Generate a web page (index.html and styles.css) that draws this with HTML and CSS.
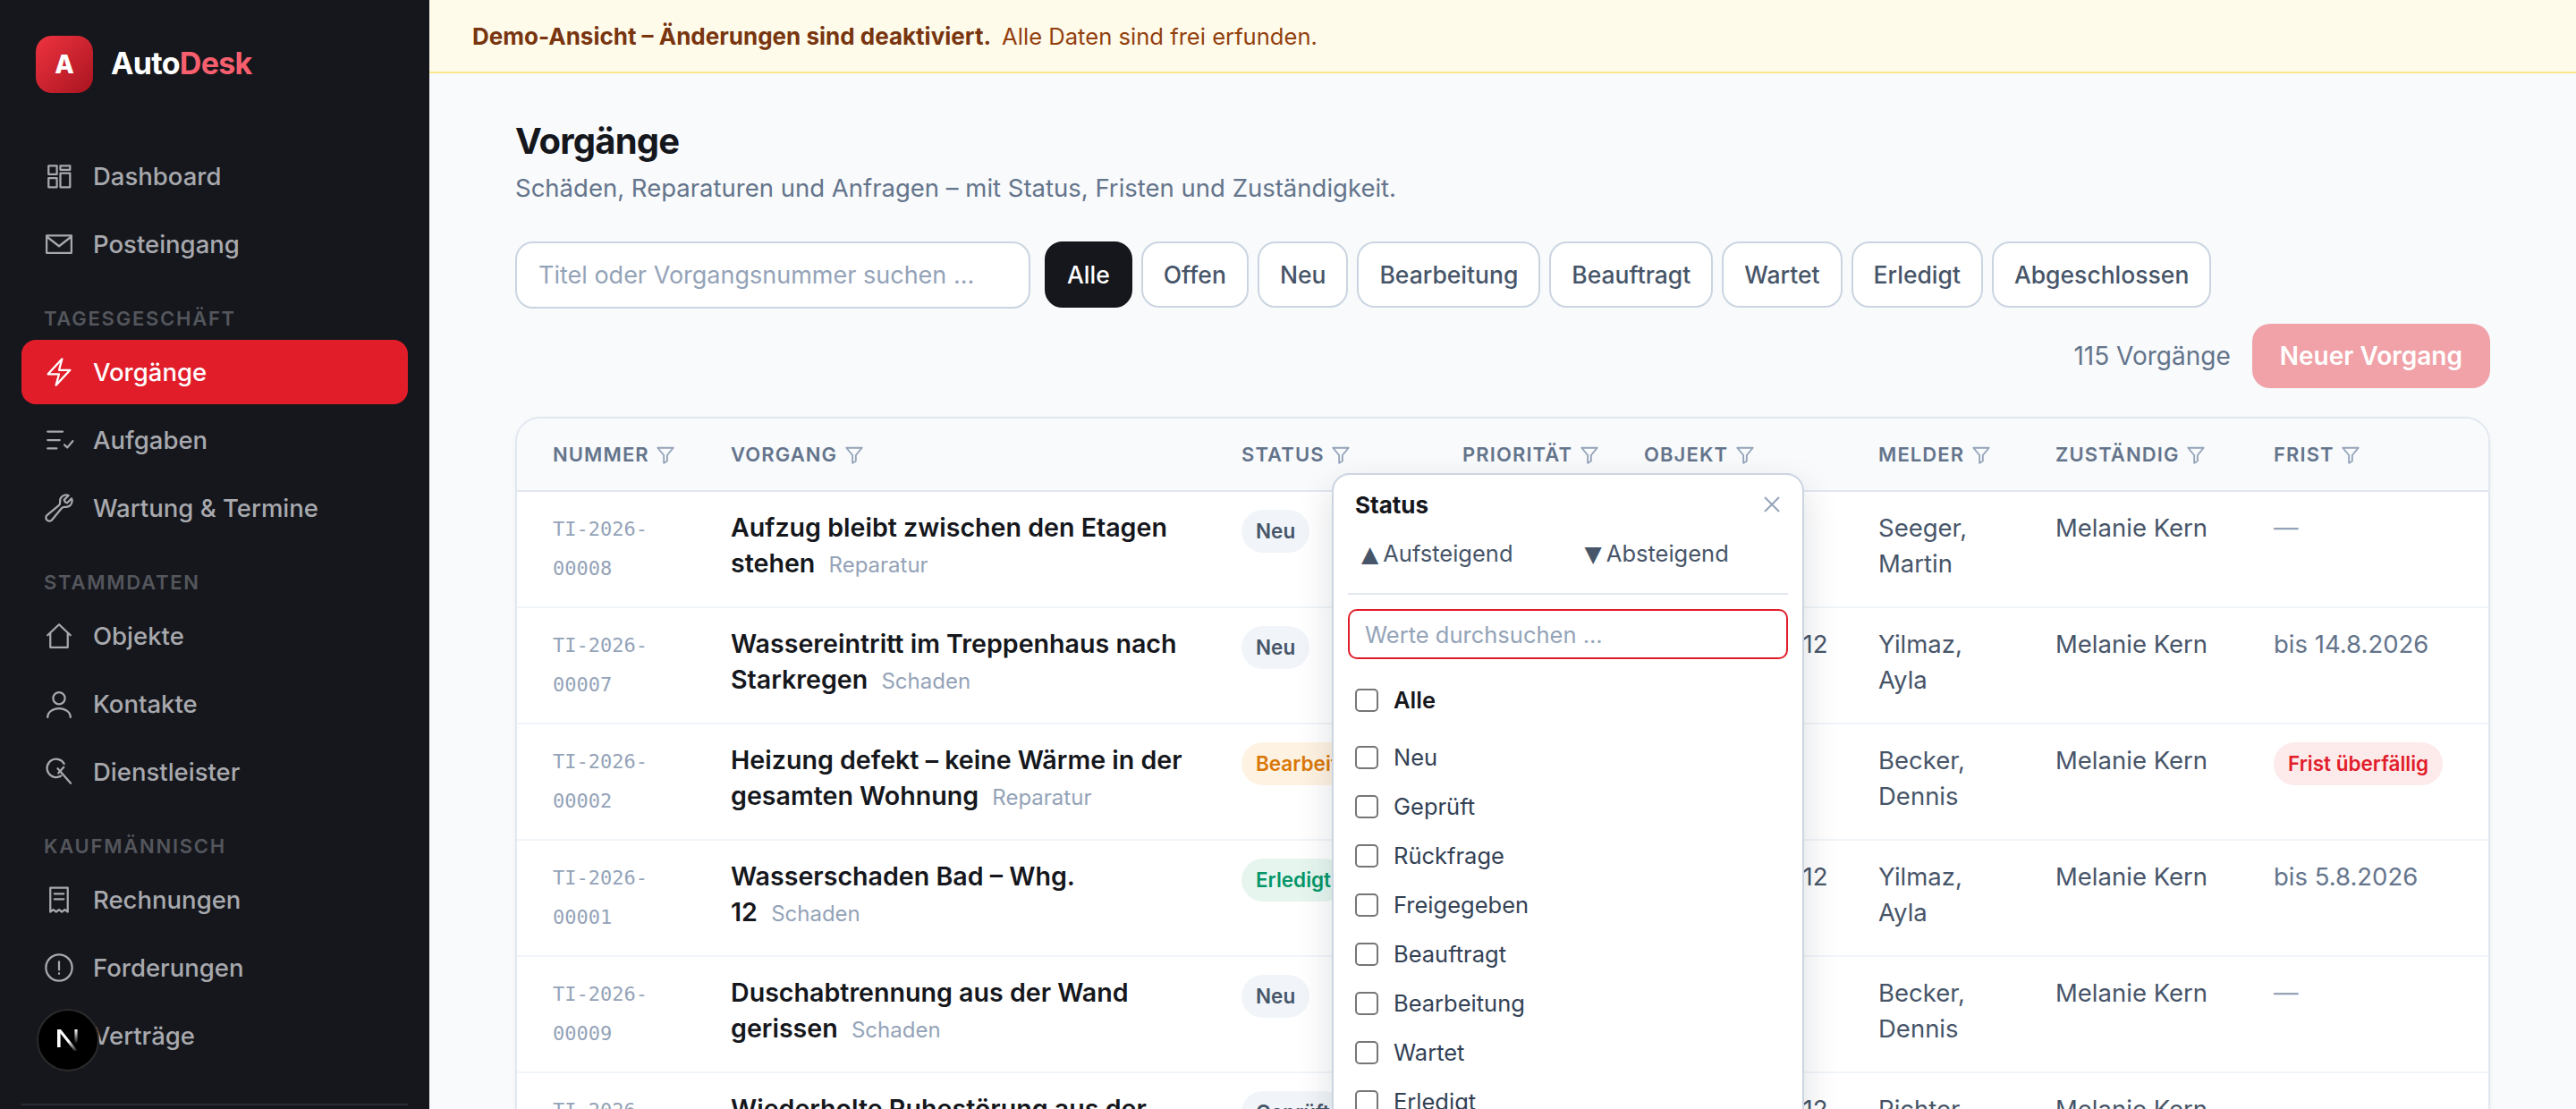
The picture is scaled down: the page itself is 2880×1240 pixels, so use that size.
FILE: index.html
```html
<!DOCTYPE html>
<html lang="de">
<head>
    <meta charset="UTF-8">
    <title>AutoDesk – Vorgänge</title>
    <link rel="stylesheet" href="styles.css">
</head>
<body>

    <svg class="icon-defs" aria-hidden="true">
        <symbol id="funnel" viewBox="0 0 24 24"><path d="M2.5 3h19l-7.5 9v7l-4 2.5V12z"/></symbol>
    </svg>

    <aside class="sidebar">
        <div class="brand">
            <span class="brand-mark">A</span>
            <span class="brand-name">Auto<span class="brand-accent">Desk</span></span>
        </div>

        <nav class="side-nav">
            <a class="nav-item" href="#">
                <svg class="nav-icon" viewBox="0 0 24 24"><path d="M4.2 4.2h6.2v6.4H4.2zM13 4.2h7.2v3H13zM4.2 13.4h6.2v6.8H4.2zM13 9.8h7.2v10.4H13z"/></svg>
                Dashboard
            </a>
            <a class="nav-item" href="#">
                <svg class="nav-icon" viewBox="0 0 24 24"><path d="M2.75 5.5h18.5v13H2.75zM3 6.5l9 7 9-7"/></svg>
                Posteingang
            </a>

            <div class="nav-label">Tagesgeschäft</div>
            <a class="nav-item active" href="#">
                <svg class="nav-icon" viewBox="0 0 24 24"><path d="M3.75 13.5l10.5-11.25L12 10.5h8.25L9.75 21.75 12 13.5H3.75z"/></svg>
                Vorgänge
            </a>
            <a class="nav-item" href="#">
                <svg class="nav-icon" viewBox="0 0 24 24"><path d="M3.5 5.7h11.2M3.5 12h9M3.5 18.3h6.7M16 15.6l2.2 2 4-4.8"/></svg>
                Aufgaben
            </a>
            <a class="nav-item" href="#">
                <svg class="nav-icon" viewBox="0 0 24 24"><path d="M21.75 6.75a4.5 4.5 0 01-4.884 4.484c-1.076-.091-2.264.071-2.95.904l-7.152 8.684a2.548 2.548 0 11-3.586-3.586l8.684-7.152c.833-.686.995-1.874.904-2.95a4.5 4.5 0 016.336-4.486l-3.276 3.276a3.004 3.004 0 002.25 2.25l3.276-3.276c.256.565.4 1.192.4 1.852z"/></svg>
                Wartung &amp; Termine
            </a>

            <div class="nav-label">Stammdaten</div>
            <a class="nav-item" href="#">
                <svg class="nav-icon" viewBox="0 0 24 24"><path d="M3.5 11.5L12 3.5l8.5 8M5.5 10v10.5h13V10"/></svg>
                Objekte
            </a>
            <a class="nav-item" href="#">
                <svg class="nav-icon" viewBox="0 0 24 24"><circle cx="12" cy="7.8" r="4.4"/><path d="M3.5 22c0-3.8 3.8-6.6 8.5-6.6s8.5 2.8 8.5 6.6"/></svg>
                Kontakte
            </a>
            <a class="nav-item" href="#">
                <svg class="nav-icon" viewBox="0 0 24 24"><path d="M15.8 6a6.8 6.8 0 10-2.3 9M11 9.5l9.7 11M11.5 13l4-4.5"/></svg>
                Dienstleister
            </a>

            <div class="nav-label">Kaufmännisch</div>
            <a class="nav-item" href="#">
                <svg class="nav-icon" viewBox="0 0 24 24"><path d="M5.5 3h13v18l-2.2-1.6-2.2 1.6-2.1-1.6-2.1 1.6-2.2-1.6-2.2 1.6zM8.5 7.5h7M8.5 11.5h7"/></svg>
                Rechnungen
            </a>
            <a class="nav-item" href="#">
                <svg class="nav-icon" viewBox="0 0 24 24"><circle cx="12" cy="12" r="9.75"/><path d="M12 7.5v6M12 16.2v.3"/></svg>
                Forderungen
            </a>
            <a class="nav-item" href="#">
                <svg class="nav-icon" viewBox="0 0 24 24"><path d="M6 3h9l4 4v14H6z"/></svg>
                Verträge
            </a>
        </nav>

        <div class="side-divider"></div>

        <!-- Next.js dev indicator -->
        <div class="dev-badge">
            <svg viewBox="0 0 32 32" width="32" height="32">
                <defs>
                    <linearGradient id="nFade" x1="0" y1="0" x2="1" y2="1">
                        <stop offset="0.55" stop-color="#fff"/>
                        <stop offset="1" stop-color="#fff" stop-opacity="0"/>
                    </linearGradient>
                    <linearGradient id="nFadeUp" x1="0" y1="0" x2="0" y2="1">
                        <stop offset="0" stop-color="#fff"/>
                        <stop offset="1" stop-color="#fff" stop-opacity="0"/>
                    </linearGradient>
                </defs>
                <path d="M4 4h3.6v20H4z" fill="#fff"/>
                <path d="M4 4h4l19 24h-4z" fill="url(#nFade)"/>
                <path d="M23.4 4h3.2v16h-3.2z" fill="url(#nFadeUp)"/>
            </svg>
        </div>
    </aside>

    <div class="main">
        <div class="demo-banner">
            <strong>Demo-Ansicht – Änderungen sind deaktiviert.</strong>
            <span class="demo-note">Alle Daten sind frei erfunden.</span>
        </div>

        <div class="content">
            <h1 class="page-title">Vorgänge</h1>
            <p class="page-sub">Schäden, Reparaturen und Anfragen – mit Status, Fristen und Zuständigkeit.</p>

            <div class="toolbar">
                <input class="search" type="text" placeholder="Titel oder Vorgangsnummer suchen ...">
                <div class="chips">
                    <button class="chip active">Alle</button>
                    <button class="chip">Offen</button>
                    <button class="chip">Neu</button>
                    <button class="chip">Bearbeitung</button>
                    <button class="chip">Beauftragt</button>
                    <button class="chip">Wartet</button>
                    <button class="chip">Erledigt</button>
                    <button class="chip">Abgeschlossen</button>
                </div>
            </div>

            <div class="actions">
                <span class="count">115 Vorgänge</span>
                <button class="btn-new">Neuer Vorgang</button>
            </div>

            <div class="table-card">
                <table class="cases">
                    <colgroup>
                        <col class="c-num"><col class="c-title"><col class="c-status"><col class="c-prio">
                        <col class="c-obj"><col class="c-rep"><col class="c-owner"><col class="c-due">
                    </colgroup>
                    <thead>
                        <tr>
                            <th>Nummer <svg class="funnel"><use href="#funnel"/></svg></th>
                            <th>Vorgang <svg class="funnel"><use href="#funnel"/></svg></th>
                            <th>Status <svg class="funnel"><use href="#funnel"/></svg></th>
                            <th>Priorität <svg class="funnel"><use href="#funnel"/></svg></th>
                            <th>Objekt <svg class="funnel"><use href="#funnel"/></svg></th>
                            <th>Melder <svg class="funnel"><use href="#funnel"/></svg></th>
                            <th>Zuständig <svg class="funnel"><use href="#funnel"/></svg></th>
                            <th>Frist <svg class="funnel"><use href="#funnel"/></svg></th>
                        </tr>
                    </thead>
                    <tbody>
                        <tr>
                            <td class="num">TI-2026-<br>00008</td>
                            <td class="title">Aufzug bleibt zwischen den Etagen<br>stehen <span class="kind">Reparatur</span></td>
                            <td><span class="pill pill-grey">Neu</span></td>
                            <td></td>
                            <td class="obj">Parkring 3</td>
                            <td>Seeger, Martin</td>
                            <td>Melanie Kern</td>
                            <td class="none">—</td>
                        </tr>
                        <tr>
                            <td class="num">TI-2026-<br>00007</td>
                            <td class="title">Wassereintritt im Treppenhaus nach<br>Starkregen <span class="kind">Schaden</span></td>
                            <td><span class="pill pill-grey">Neu</span></td>
                            <td></td>
                            <td class="obj">Lindenstraße 12</td>
                            <td>Yilmaz, Ayla</td>
                            <td>Melanie Kern</td>
                            <td class="due">bis 14.8.2026</td>
                        </tr>
                        <tr>
                            <td class="num">TI-2026-<br>00002</td>
                            <td class="title">Heizung defekt – keine Wärme in der<br>gesamten Wohnung <span class="kind">Reparatur</span></td>
                            <td><span class="pill pill-amber">Bearbeitung</span></td>
                            <td></td>
                            <td class="obj">Parkring 3</td>
                            <td>Becker, Dennis</td>
                            <td>Melanie Kern</td>
                            <td><span class="pill pill-red">Frist überfällig</span></td>
                        </tr>
                        <tr>
                            <td class="num">TI-2026-<br>00001</td>
                            <td class="title">Wasserschaden Bad – Whg.<br>12 <span class="kind">Schaden</span></td>
                            <td><span class="pill pill-green">Erledigt</span></td>
                            <td></td>
                            <td class="obj">Lindenstraße 12</td>
                            <td>Yilmaz, Ayla</td>
                            <td>Melanie Kern</td>
                            <td class="due">bis 5.8.2026</td>
                        </tr>
                        <tr>
                            <td class="num">TI-2026-<br>00009</td>
                            <td class="title">Duschabtrennung aus der Wand<br>gerissen <span class="kind">Schaden</span></td>
                            <td><span class="pill pill-grey">Neu</span></td>
                            <td></td>
                            <td class="obj">Parkring 3</td>
                            <td>Becker, Dennis</td>
                            <td>Melanie Kern</td>
                            <td class="none">—</td>
                        </tr>
                        <tr>
                            <td class="num">TI-2026-<br>00010</td>
                            <td class="title">Wiederholte Ruhestörung aus der<br>Nachbarwohnung <span class="kind">Anfrage</span></td>
                            <td><span class="pill pill-grey">Geprüft</span></td>
                            <td></td>
                            <td class="obj">Lindenstraße 12</td>
                            <td>Richter, Jonas</td>
                            <td>Melanie Kern</td>
                            <td class="none">—</td>
                        </tr>
                    </tbody>
                </table>

                <!-- Column filter popover, open on Status -->
                <div class="filter-pop">
                    <div class="pop-head">
                        <span class="pop-title">Status</span>
                        <svg class="pop-close" viewBox="0 0 18 18"><path d="M1 1l16 16M17 1L1 17"/></svg>
                    </div>
                    <div class="pop-sort">
                        <span class="sort-opt"><span class="sort-arrow">▲</span>Aufsteigend</span>
                        <span class="sort-opt"><span class="sort-arrow">▼</span>Absteigend</span>
                    </div>
                    <input class="pop-search" type="text" placeholder="Werte durchsuchen ...">
                    <label class="pop-all"><input type="checkbox"> Alle</label>
                    <label class="pop-opt"><input type="checkbox"> Neu</label>
                    <label class="pop-opt"><input type="checkbox"> Geprüft</label>
                    <label class="pop-opt"><input type="checkbox"> Rückfrage</label>
                    <label class="pop-opt"><input type="checkbox"> Freigegeben</label>
                    <label class="pop-opt"><input type="checkbox"> Beauftragt</label>
                    <label class="pop-opt"><input type="checkbox"> Bearbeitung</label>
                    <label class="pop-opt"><input type="checkbox"> Wartet</label>
                    <label class="pop-opt"><input type="checkbox"> Erledigt</label>
                    <label class="pop-opt"><input type="checkbox"> Abgeschlossen</label>
                </div>
            </div>
        </div>
    </div>

</body>
</html>
```

FILE: styles.css
```css
* {
    box-sizing: border-box;
}

html, body {
    height: 100%;
}

body {
    margin: 0;
    display: flex;
    overflow: hidden;
    font-family: Inter, "Noto Sans", sans-serif;
    font-size: 27.5px;
    color: #15171c;
    background: #f8fafc;
}

.icon-defs {
    position: absolute;
    width: 0;
    height: 0;
}

/* Sidebar */
.sidebar {
    position: relative;
    flex: 0 0 480px;
    height: 100%;
    overflow: hidden;
    padding: 40px 24px 0;
    background: #15171c;
}

.brand {
    display: flex;
    align-items: center;
    gap: 20px;
    padding-left: 16px;
}

.brand-mark {
    display: flex;
    align-items: center;
    justify-content: center;
    width: 64px;
    height: 64px;
    border-radius: 18px;
    background: linear-gradient(135deg, #ef3340, #a8141f);
    color: white;
    font-size: 28px;
    font-weight: 800;
}

.brand-name {
    position: relative;
    top: -2px;
    font-size: 34px;
    font-weight: 700;
    letter-spacing: -0.02em;
    color: white;
}

.brand-accent {
    color: #f85f6e;
}

.side-nav {
    display: flex;
    flex-direction: column;
    gap: 4px;
    margin-top: 57px;
}

.nav-item {
    display: flex;
    align-items: center;
    gap: 20px;
    flex: none;
    height: 72px;
    padding-left: 24px;
    border-radius: 16px;
    color: #a8a9ae;
    font-weight: 500;
    text-decoration: none;
}

.nav-item.active {
    background: #e11d2a;
    color: white;
}

.nav-icon {
    flex: none;
    width: 36px;
    height: 36px;
    fill: none;
    stroke: currentColor;
    stroke-width: 1.5;
    stroke-linecap: round;
    stroke-linejoin: round;
}

.nav-label {
    flex: none;
    margin: 27px 0 0 25px;
    height: 36px;
    line-height: 32px;
    font-size: 22px;
    font-weight: 600;
    letter-spacing: 0.08em;
    text-transform: uppercase;
    color: #54565c;
}

.side-divider {
    height: 2px;
    margin-top: 40px;
    background: #2a2d33;
}

.dev-badge {
    position: absolute;
    left: 41px;
    top: 1128px;
    display: flex;
    align-items: center;
    justify-content: center;
    width: 70px;
    height: 70px;
    border: 2px solid #2b2b2b;
    border-radius: 50%;
    background: #000;
}

/* Main */
.main {
    flex: 1;
    min-width: 0;
    height: 100%;
    overflow: hidden;
}

.demo-banner {
    display: flex;
    align-items: center;
    gap: 12px;
    height: 82px;
    padding-left: 48px;
    background: #fffbeb;
    border-bottom: 2px solid #fde68a;
    font-size: 26px;
    color: #92400e;
}

.demo-banner strong {
    font-weight: 700;
    color: #78350f;
}

.demo-note {
    font-size: 25.6px;
}

.content {
    padding: 48px 96px;
}

.page-title {
    margin: 0;
    font-size: 40px;
    line-height: 56px;
    font-weight: 700;
    letter-spacing: -0.02em;
}

.page-sub {
    margin: 2px 0 0;
    line-height: 44px;
    color: #64748b;
}

.toolbar {
    display: flex;
    gap: 16px;
    margin-top: 38px;
}

.search {
    width: 576px;
    height: 75px;
    padding: 0 24px;
    border: 2px solid #cbd5e1;
    border-radius: 20px;
    background: white;
    font: inherit;
    font-size: 27px;
    color: #15171c;
}

.search::placeholder,
.pop-search::placeholder {
    color: #94a3b8;
    opacity: 1;
}

.chips {
    display: flex;
    gap: 10px;
}

.chip {
    height: 74px;
    padding: 0 23px;
    border: 2px solid #cbd5e1;
    border-radius: 20px;
    background: white;
    font: inherit;
    font-size: 26.5px;
    font-weight: 500;
    color: #475569;
}

.chip.active {
    border-color: #15171c;
    background: #15171c;
    color: white;
}

.actions {
    display: flex;
    align-items: center;
    justify-content: flex-end;
    gap: 24px;
    margin-top: 17px;
}

.count {
    font-size: 28px;
    color: #64748b;
}

.btn-new {
    height: 72px;
    padding: 0 31px;
    border: none;
    border-radius: 20px;
    background: #f0a2a8;
    color: white;
    font: inherit;
    font-size: 28px;
    font-weight: 600;
}

/* Table */
.table-card {
    position: relative;
    margin-top: 32px;
    border: 2px solid #e2e8f0;
    border-radius: 28px;
    background: white;
    box-shadow: 0 2px 6px rgba(15, 23, 42, 0.04);
}

.cases {
    width: 100%;
    table-layout: fixed;
    border-collapse: separate;
    border-spacing: 0;
}

.c-num { width: 199px; }
.c-title { width: 571px; }
.c-status { width: 247px; }
.c-prio { width: 203px; }
.c-obj { width: 262px; }
.c-rep { width: 198px; }
.c-owner { width: 244px; }
.c-due { width: 280px; }

.cases th {
    height: 82px;
    padding: 0 0 0 40px;
    background: #f8fafc;
    border-bottom: 2px solid #e2e8f0;
    text-align: left;
    white-space: nowrap;
    font-size: 22px;
    font-weight: 600;
    letter-spacing: 0.05em;
    text-transform: uppercase;
    color: #64748b;
}

.cases th:first-child {
    border-top-left-radius: 26px;
}

.cases th:last-child {
    border-top-right-radius: 26px;
}

.funnel {
    width: 22px;
    height: 22px;
    margin-left: 1px;
    vertical-align: -4px;
    fill: none;
    stroke: #94a3b8;
    stroke-width: 2;
    stroke-linejoin: round;
}

.cases td {
    padding: 20px 20px 20px 40px;
    border-bottom: 2px solid #f1f5f9;
    vertical-align: top;
    line-height: 40px;
    color: #475569;
}

.cases td.num {
    padding-right: 40px;
    font-family: "DejaVu Sans Mono", "Liberation Mono", monospace;
    font-size: 22px;
    line-height: 44px;
    color: #94a3b8;
}

.cases td.title {
    padding-right: 0;
    font-size: 28.6px;
    font-weight: 600;
    color: #15171c;
}

.kind {
    margin-left: 8px;
    font-size: 24px;
    font-weight: 400;
    color: #94a3b8;
}

.cases td.obj {
    white-space: nowrap;
}

.cases td.due {
    color: #64748b;
}

.cases td.none {
    color: #94a3b8;
}

.pill {
    display: inline-block;
    height: 48px;
    padding: 0 16px;
    border-radius: 24px;
    line-height: 48px;
    white-space: nowrap;
    font-size: 22.5px;
    font-weight: 600;
}

.pill-grey { background: #f1f5f9; color: #475569; }
.pill-amber { background: #fef3e2; color: #d97706; }
.pill-green { background: #e6f6ef; color: #059669; }
.pill-red { background: #fdeaea; color: #e11d2a; }

/* Filter popover */
.filter-pop {
    position: absolute;
    left: 911px;
    top: 61px;
    width: 528px;
    padding: 14px 16px 0;
    border: 2px solid #cbd5e1;
    border-radius: 20px;
    background: white;
    box-shadow: 0 16px 40px rgba(15, 23, 42, 0.14);
    font-size: 25.5px;
    color: #334155;
}

.pop-head {
    display: flex;
    align-items: center;
    justify-content: space-between;
    height: 38px;
    padding: 0 8px;
}

.pop-title {
    font-size: 26px;
    font-weight: 700;
    color: #15171c;
}

.pop-close {
    width: 18px;
    height: 18px;
    margin-right: 1px;
    fill: none;
    stroke: #94a3b8;
    stroke-width: 2;
}

.pop-sort {
    display: flex;
    gap: 80px;
    height: 82px;
    margin-bottom: 16px;
    padding: 20px 0 0 15px;
    border-bottom: 2px solid #e2e8f0;
    color: #475569;
}

.sort-arrow {
    margin-right: 5px;
    font-family: "DejaVu Sans", sans-serif;
    font-size: 25px;
}

.pop-search {
    display: block;
    width: 100%;
    height: 56px;
    padding: 0 17px;
    border: 2px solid #e11d2a;
    border-radius: 10px;
    font: inherit;
}

.pop-all,
.pop-opt {
    display: flex;
    align-items: center;
    gap: 17px;
    height: 55px;
    padding-left: 8px;
}

.pop-all {
    margin-top: 18px;
    margin-bottom: 9px;
    font-weight: 600;
    color: #15171c;
}

.filter-pop input[type="checkbox"] {
    width: 26px;
    height: 26px;
    margin: 0;
    appearance: none;
    border: 2px solid #767676;
    border-radius: 5px;
    background: white;
}
```
